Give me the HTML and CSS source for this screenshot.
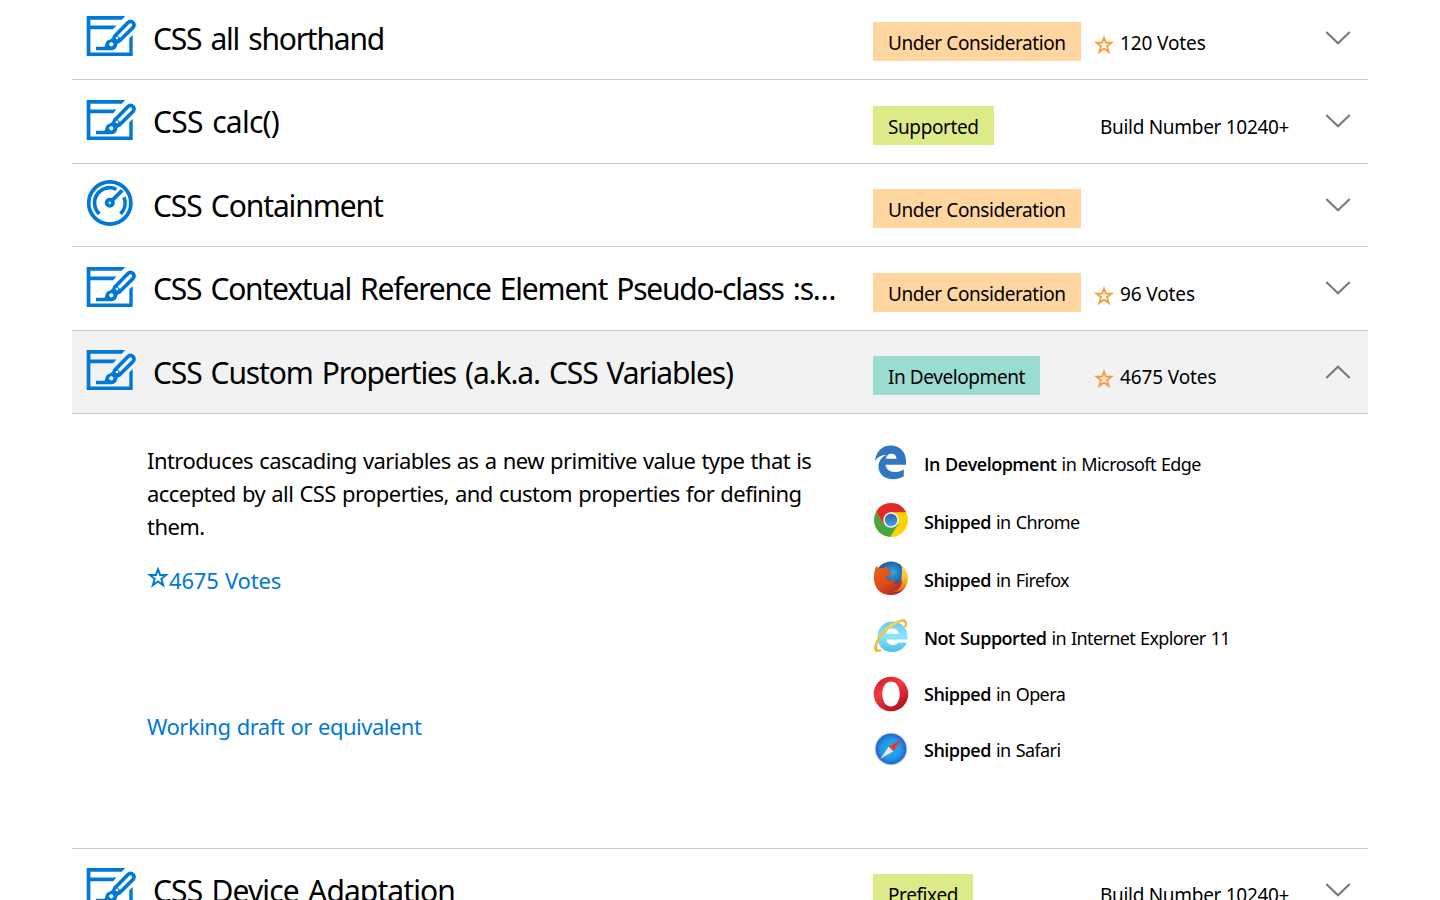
FILE: index.html
```html
<!DOCTYPE html>
<html lang="en">
<head>
<meta charset="utf-8">
<title>Platform status</title>
<link rel="stylesheet" href="styles.css">
</head>
<body>
<svg class="defs" width="0" height="0" aria-hidden="true">
  <defs>
    <symbol id="brush" viewBox="0 0 49 40">
      <path fill="currentColor" d="M-.3 .1H38.200L34.800 3.700H3.400V9.400H29.500L26 13.200H3.400V36.600H42.300V22.300L45.700 19V40H-.3Z"/>
      <path fill="none" stroke="currentColor" stroke-width="3.700" stroke-linejoin="round" d="M27.600 20.200 41 6.500a3.500 3.500 0 0 1 5 5L32.400 25Z"/>
      <path fill="currentColor" d="M9 30.700H17.500C18.500 29.500 18 27.200 19.800 25.200 21.300 23.700 23 23.800 24 23L28.300 17.800 35.200 23.700 30.200 28.500C30 31.700 28 34.200 24.500 34.200H9Z"/>
      <circle cx="24.300" cy="28.300" r="2.100" fill="#fff"/>
      <circle cx="30" cy="22" r="1.300" fill="#fff"/>
    </symbol>
    <symbol id="gauge" viewBox="0 0 46 46">
      <g fill="none" stroke="currentColor" stroke-width="3.700">
        <circle cx="22.800" cy="23" r="21.100"/>
        <path d="M12.300 33.800A15.100 15.100 0 0 1 29.400 9.300M37 17.200A15.100 15.100 0 0 1 33.500 33.800"/>
        <circle cx="22.800" cy="22.800" r="3.200"/>
        <path d="M25.200 20.400 35.200 10.400"/>
      </g>
    </symbol>
    <symbol id="star" viewBox="0 0 20 20">
      <path fill="none" stroke="currentColor" stroke-width="1.800" d="M10 2.600 11.900 7.700H17.400L13 11.200 14.700 17 10 13.600 5.300 17 7 11.200 2.600 7.700H8.100Z"/>
    </symbol>
    <symbol id="chevron" viewBox="0 0 26 14">
      <path fill="none" stroke="#777" stroke-width="2" d="M1.300 1 13 12.300 24.700 1"/>
    </symbol>
    <linearGradient id="fox" x2=".7" y2="1"><stop stop-color="#e8661b"/><stop offset=".6" stop-color="#db4b1c"/><stop offset="1" stop-color="#a9251c"/></linearGradient>
    <linearGradient id="foxtail" y2="1" x2="0"><stop stop-color="#ffe873"/><stop offset=".5" stop-color="#fbb51d"/><stop offset="1" stop-color="#dc4a1c"/></linearGradient>
    <radialGradient id="globe" cx=".55" cy=".35" r=".65"><stop stop-color="#39a8dc"/><stop offset=".5" stop-color="#1b66b4"/><stop offset="1" stop-color="#173a80"/></radialGradient>
    <linearGradient id="ie" x2="0" y2="1"><stop stop-color="#69caf0"/><stop offset=".5" stop-color="#8be6fa"/><stop offset="1" stop-color="#4abde8"/></linearGradient>
    <linearGradient id="gold" x2="1" y2="0"><stop stop-color="#f0b62e"/><stop offset=".5" stop-color="#fbd558"/><stop offset="1" stop-color="#eeb135"/></linearGradient>
    <linearGradient id="opera" x2=".6" y2="1"><stop stop-color="#c51620"/><stop offset=".45" stop-color="#f13b42"/><stop offset="1" stop-color="#b5141c"/></linearGradient>
    <radialGradient id="safari"><stop stop-color="#24b5ea"/><stop offset=".65" stop-color="#2494e6"/><stop offset="1" stop-color="#2463d1"/></radialGradient>
    <linearGradient id="blue" x2="0" y2="1"><stop stop-color="#2d64a9"/><stop offset="1" stop-color="#4a9be3"/></linearGradient>
  </defs>
</svg>

<main class="page">
  <section class="list">
    <div class="row">
      <svg class="kind"><use href="#brush"/></svg>
      <h2 class="title t-all">CSS all shorthand</h2>
      <div class="state"><span class="badge orange">Under Consideration</span></div>
      <div class="info"><svg class="star"><use href="#star"/></svg><span>120 Votes</span></div>
      <svg class="chevron"><use href="#chevron"/></svg>
    </div>
    <div class="row">
      <svg class="kind"><use href="#brush"/></svg>
      <h2 class="title t-calc">CSS calc()</h2>
      <div class="state"><span class="badge green">Supported</span></div>
      <div class="info build"><span>Build Number 10240+</span></div>
      <svg class="chevron"><use href="#chevron"/></svg>
    </div>
    <div class="row">
      <svg class="kind gauge"><use href="#gauge"/></svg>
      <h2 class="title">CSS Containment</h2>
      <div class="state"><span class="badge orange">Under Consideration</span></div>
      <div class="info"></div>
      <svg class="chevron"><use href="#chevron"/></svg>
    </div>
    <div class="row">
      <svg class="kind"><use href="#brush"/></svg>
      <h2 class="title t-ref">CSS Contextual Reference Element Pseudo-class :s…</h2>
      <div class="state"><span class="badge orange">Under Consideration</span></div>
      <div class="info"><svg class="star"><use href="#star"/></svg><span>96 Votes</span></div>
      <svg class="chevron"><use href="#chevron"/></svg>
    </div>
    <div class="row open">
      <svg class="kind"><use href="#brush"/></svg>
      <h2 class="title t-var">CSS Custom Properties (a.k.a. CSS Variables)</h2>
      <div class="state"><span class="badge teal">In Development</span></div>
      <div class="info"><svg class="star"><use href="#star"/></svg><span>4675 Votes</span></div>
      <svg class="chevron up"><use href="#chevron"/></svg>
    </div>

    <div class="panel">
      <div class="about">
        <p class="text">Introduces cascading variables as a new primitive value type that is<br>accepted by all CSS properties, and custom properties for defining<br>them.</p>
        <a class="link votes"><svg class="star"><use href="#star"/></svg><span>4675 Votes</span></a>
        <a class="link draft">Working draft or equivalent</a>
      </div>
      <ul class="browsers">
        <li>
          <svg class="logo" viewBox="0 0 36 36"><path fill="#3277bd" d="M2 17C3 7.500 9 1.500 17.500 1.500 27 1.500 33 8 33 17V20.800H12.500C13 25.500 17 28 21.500 28 25 28 28 27 30.800 25.400V32.300C27.500 34.400 24 35.200 20.500 35.200 11.500 35.200 5.500 30 5.500 22.500 5.500 17.500 8.500 13 13.500 10.800 8.500 11 4.500 13 2 17ZM12.800 14.800H23.600C23.400 11.500 21.500 9.700 18.300 9.700 15.300 9.700 13.200 11.700 12.800 14.800Z"/></svg>
          <span><b>In Development</b> in Microsoft Edge</span>
        </li>
        <li>
          <svg class="logo" viewBox="0 0 36 36"><circle cx="18" cy="18" r="17" fill="#fcd209"/><path fill="#48a547" d="M3.300 9.500A17 17 0 0 0 17 35L25.300 22.200 18 18 10.700 22.200Z"/><path fill="#de2b27" d="M3.300 9.500A17 17 0 0 1 33.200 10.300H18L10.700 22.200Z"/><circle cx="18" cy="18" r="7.700" fill="#f4f4ef"/><circle cx="18" cy="18" r="6.200" fill="url(#blue)"/></svg>
          <span><b>Shipped</b> in Chrome</span>
        </li>
        <li>
          <svg class="logo" viewBox="0 0 36 36"><circle cx="18" cy="17" r="15.500" fill="url(#globe)"/><path fill="url(#foxtail)" d="M28 4.500C34 9 36 16 34.500 22 32 31 24 35 17 34.500L15 29C23 29.500 28 24 28.500 17 29 13 29.500 8 28 4.500Z"/><path fill="url(#fox)" d="M3.500 6 6 8.500C7.500 7.500 9.500 7.500 11 8L14 5.500C13.500 8 14 9.500 16 10.500L18.500 12.300 17.500 14.500 13.500 16.500C13 20 16 21 20 19.500 22.500 19 23 21 20.500 22.500 22 25.500 27 23 29 19 30 26 25 30 21 31.500 27 32.500 31 29 33.500 25 29 34 21 36 13 34.500 4 32.500 0 24 1 15 1.300 11 2.500 8 3.500 6Z"/></svg>
          <span><b>Shipped</b> in Firefox</span>
        </li>
        <li>
          <svg class="logo" viewBox="0 0 36 36"><path fill="url(#ie)" d="M4.500 19C4.500 9.500 11 3.500 19.500 3.500S34.500 10 34.500 18.500V21.500H13.500C14 25.500 17 27 20 27 22.500 27 24.500 26 25.500 24.500H33.800C31.500 30.500 26 34 19.500 34 10.500 34 4.500 28 4.500 19ZM13.500 15.800H25.800C25.500 12.500 23 10.500 19.700 10.500S13.900 12.500 13.500 15.800Z"/><path fill="url(#gold)" d="M30.800 9.300C33 4.500 31.200 3 27.500 4.200 21 6 11 14 6.500 22 2.500 29 3.500 32.500 7.500 31.300L9.200 32.500C4 35.500 0 34.500 1.500 28 3.500 18.500 15.500 5 26 2 33-.200 36 2.800 32.600 9.800Z"/></svg>
          <span class="narrow"><b>Not Supported</b> in Internet Explorer 11</span>
        </li>
        <li class="opera">
          <svg class="logo" viewBox="0 0 36 36"><path fill="url(#opera)" fill-rule="evenodd" d="M18 .8A17.300 17.200 0 1 1 18 35.200 17.300 17.200 0 1 1 18 .8ZM18 5.500C12.800 5.500 9.300 11 9.300 18S12.800 30.500 18 30.500 26.700 25 26.700 18 23.200 5.500 18 5.500Z"/></svg>
          <span><b>Shipped</b> in Opera</span>
        </li>
        <li class="safari">
          <svg class="logo" viewBox="0 0 36 36"><circle cx="18" cy="18" r="16.300" fill="#b8cddd"/><circle cx="18" cy="18" r="15.300" fill="url(#safari)"/><path fill="#e13b35" d="M28.600 8.200 15.700 15.700 20.300 20.200Z"/><path fill="#efe9e5" d="M7.400 27.800 15.700 15.700 20.300 20.200Z"/></svg>
          <span><b>Shipped</b> in Safari</span>
        </li>
      </ul>
    </div>

    <div class="row">
      <svg class="kind"><use href="#brush"/></svg>
      <h2 class="title t-dev">CSS Device Adaptation</h2>
      <div class="state"><span class="badge green">Prefixed</span></div>
      <div class="info build"><span>Build Number 10240+</span></div>
      <svg class="chevron"><use href="#chevron"/></svg>
    </div>
  </section>
</main>
</body>
</html>
```

FILE: styles.css
```css
* { box-sizing: border-box; }
body { margin: 0; background: #fff; color: #000; font-family: "Noto Sans", sans-serif; }
.defs { display: block; height: 0; }
.page { height: 900px; overflow: hidden; }
.list { width: 1296px; margin: -3.5px auto 0; }
.row {
  display: grid;
  grid-template-columns: 66px 720px 221px 231px 26px;
  align-items: start;
  height: 83.5px;
  padding-left: 15px;
  border-bottom: 1px solid #ccc;
}
.open { background: #f2f2f2; }
.kind { width: 49px; height: 40px; margin-top: 19.5px; color: #0078d7; overflow: visible; }
.kind, .kind use, symbol { overflow: visible; }
.gauge { width: 46px; height: 46px; margin-top: 16.5px; }
.title { margin: 21px 0 0; font-size: 30px; line-height: 42px; font-weight: 400; white-space: nowrap; letter-spacing: -1.1px; word-spacing: 2.5px; }
.t-all { letter-spacing: -1.2px; }
.t-calc { letter-spacing: -.75px; }
.t-ref { letter-spacing: -1.2px; }
.t-var { letter-spacing: -1.15px; }
.t-dev { letter-spacing: -.9px; }
.badge {
  display: inline-block;
  height: 39px;
  padding: 0 15px;
  font-size: 19px;
  line-height: 42px;
  letter-spacing: -.42px;
  white-space: nowrap;
}
.state { margin-top: 25.5px; height: 39px; display: flex; }
.orange { background: #ffd5a0; }
.green { background: #dceb87; letter-spacing: -.4px; }
.teal { background: #9bdcd2; }
.info { display: flex; gap: 6px; height: 39px; margin-top: 25.5px; font-size: 19px; line-height: 42px; letter-spacing: -.12px; white-space: nowrap; }
.build { padding-left: 6px; letter-spacing: -.3px; }
.star { flex: none; width: 20px; height: 20px; margin-top: 13px; color: #ff9a2e; }
.chevron { width: 26px; height: 14px; margin-top: 34px; }
.up { transform: rotate(180deg); }
.panel { display: flex; height: 434.5px; padding-left: 75px; border-bottom: 1px solid #ccc; }
.about { display: flex; flex-direction: column; width: 726px; padding-top: 30px; font-size: 22px; line-height: 33px; letter-spacing: -.5px; word-spacing: 1px; }
.text { margin: 0; white-space: nowrap; letter-spacing: -.56px; }
.link { color: #0078d7; }
.votes { display: flex; margin-top: 21px; letter-spacing: -.2px; }
.votes .star { width: 22px; height: 23px; margin-top: 2px; color: inherit; }
.votes .star { stroke-width: 1.6; }
.draft { margin-top: 113px; }
.browsers { margin: 30px 0 0; padding: 0; list-style: none; font-size: 18px; line-height: 26px; letter-spacing: -.58px; word-spacing: 1px; }
.browsers li { display: flex; gap: 15px; height: 58px; white-space: nowrap; }
.browsers span { padding-top: 7px; }
.browsers .narrow { letter-spacing: -.65px; }
.browsers b { font-family: "Open Sans", sans-serif; font-weight: 600; letter-spacing: -.5px; }
.logo { width: 36px; height: 36px; }
.browsers .opera { height: 56px; }
.browsers .opera span, .browsers .safari span { padding-top: 5px; }
.safari .logo { margin-top: -1px; }
```
